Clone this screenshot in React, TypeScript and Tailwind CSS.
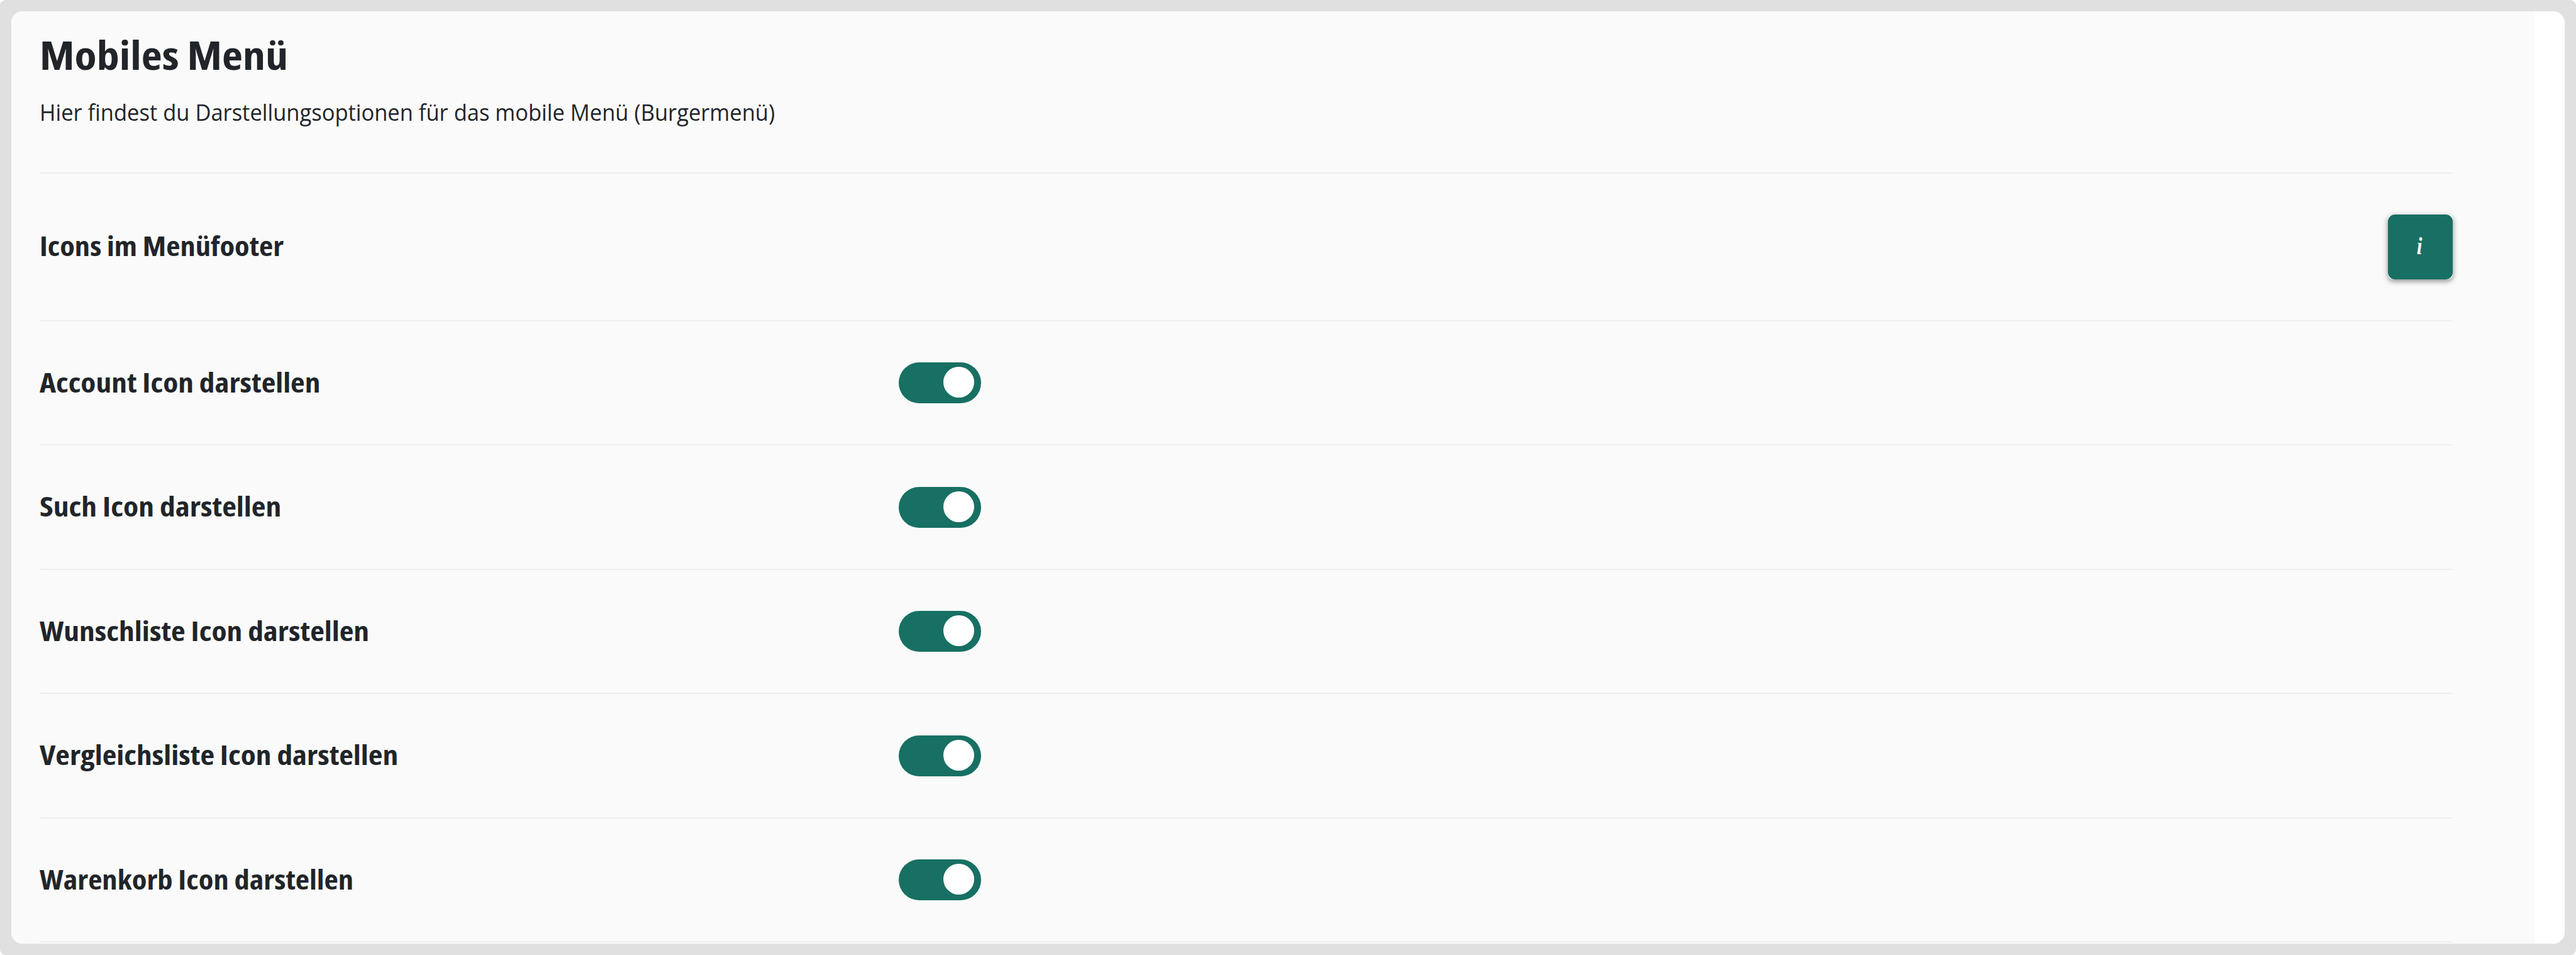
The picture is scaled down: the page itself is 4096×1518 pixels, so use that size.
type OptionRow = {
  label: string;
  stretch: string;
};

const options: OptionRow[] = [
  { label: 'Account Icon darstellen', stretch: 'scale-x-[1.148]' },
  { label: 'Such Icon darstellen', stretch: 'scale-x-[1.153]' },
  { label: 'Wunschliste Icon darstellen', stretch: 'scale-x-[1.15]' },
  { label: 'Vergleichsliste Icon darstellen', stretch: 'scale-x-[1.149]' },
  { label: 'Warenkorb Icon darstellen', stretch: 'scale-x-[1.131]' },
];

function Toggle({ label }: { label: string }) {
  return (
    <button
      role="switch"
      aria-checked="true"
      aria-label={label}
      className="flex h-[65px] w-[131px] items-start justify-end rounded-full bg-[#177063] pt-[7px] pr-[11px]"
    >
      <span className="size-[49px] rounded-full bg-white" />
    </button>
  );
}

function SettingRow({ label, stretch }: OptionRow) {
  return (
    <div className="flex h-[197.46px] items-center border-b-2 border-[#eeeeee]">
      <div className="flex w-[1366px] shrink-0 pb-[3px]">
        <span className={`origin-left text-[43px] leading-none font-bold whitespace-nowrap ${stretch}`}>{label}</span>
      </div>
      <Toggle label={label} />
    </div>
  );
}

export default function App() {
  return (
    <div className="h-[1518px] w-[4096px] bg-white">
      <div className="h-full rounded-[9px] bg-[#e0e0e0] p-[18px]">
        <main className="h-full overflow-hidden rounded-[18px] bg-white font-['Open_Sans','Noto_Sans',sans-serif] text-[#212529] [font-stretch:75%]">
          <div className="h-full w-[4013px] bg-[#fafafa] pr-[131px] pl-[45px]">
            <header className="h-[257.5px] border-b-2 border-[#eeeeee] pt-[36.5px]">
              <h1 className="w-fit origin-left scale-x-[1.143] text-[63px] leading-[64px] font-bold">Mobiles Menü</h1>
              <p className="mt-[36px] w-fit origin-left scale-x-[0.958] text-[36px] leading-[48px] font-medium [font-stretch:100%]">
                Hier findest du Darstellungsoptionen für das mobile Menü (Burgermenü)
              </p>
            </header>

            <div className="flex h-[235.5px] items-center justify-between border-b-2 border-[#eeeeee]">
              <h2 className="origin-left scale-x-[1.128] pb-[4px] text-[43px] leading-none font-bold">
                Icons im Menüfooter
              </h2>
              <div className="rounded-[8px] bg-white shadow-[0_3px_9px_rgba(0,0,0,0.45)]">
                <button
                  aria-label="Info"
                  className="flex size-[103px] items-center justify-center rounded-[11px] bg-[#177063] pr-[2px] pb-[2px] font-['Liberation_Serif',serif] text-[37px] leading-none font-bold text-white italic"
                >
                  <span className="scale-x-[0.85]">i</span>
                </button>
              </div>
            </div>

            {options.map((option) => (
              <SettingRow key={option.label} {...option} />
            ))}
          </div>
        </main>
      </div>
    </div>
  );
}
